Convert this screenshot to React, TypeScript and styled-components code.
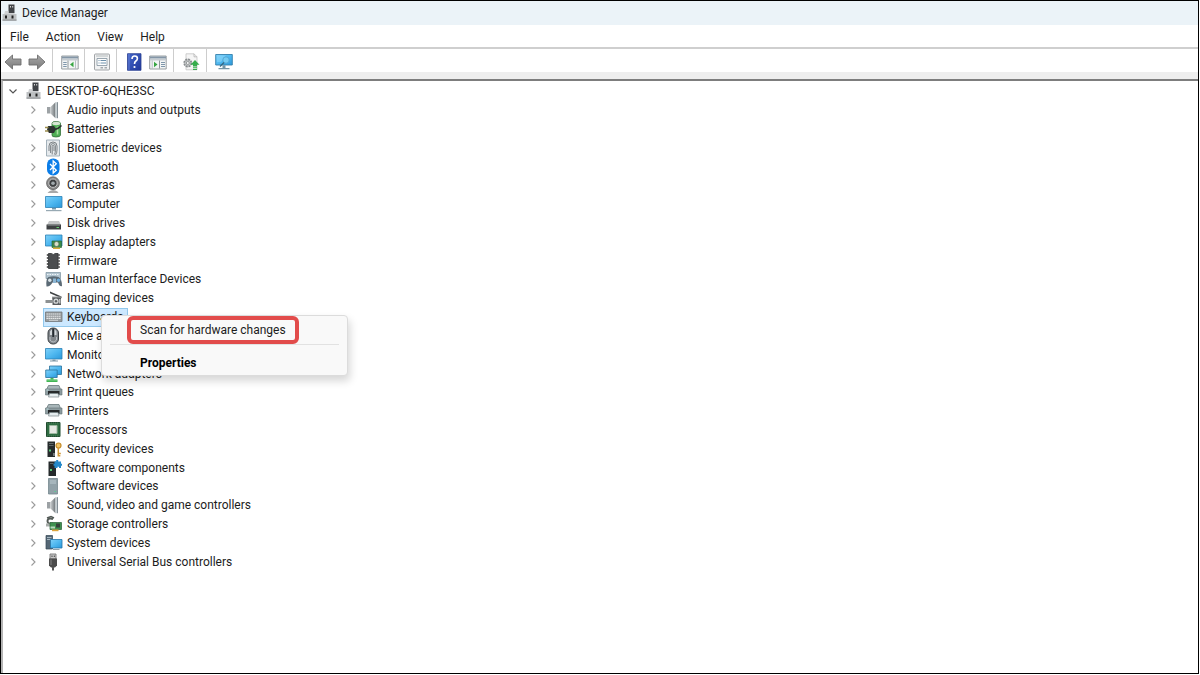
import React from "react";
import styled, { createGlobalStyle } from "styled-components";

const GlobalStyle = createGlobalStyle`
  * { box-sizing: border-box; }
  body {
    margin: 0;
    background: #fff;
    color: #1c1c1c;
    font: 12px/16px Roboto, "Open Sans", sans-serif;
  }
  button { font: inherit; color: inherit; background: none; border: 0; padding: 0; }
`;

const Screen = styled.div`
  display: flex;
  height: 100vh;
  padding: 0 1px 1px 0;
`;

const Window = styled.div`
  flex: 1;
  display: flex;
  flex-direction: column;
  border: 1px solid #000;
`;

const TitleBar = styled.header`
  display: flex;
  align-items: center;
  gap: 3px;
  height: 24px;
  background: #ebf3f8;
`;

const Title = styled.h1`
  margin: 0;
  font-size: 12px;
  line-height: 16px;
  font-weight: 400;
`;

const MenuBar = styled.nav`
  display: flex;
  gap: 1px;
  height: 24px;
  padding-left: 1px;
  border-bottom: 2px solid #cfcfcf;
`;

const MenuButton = styled.button`
  padding: 2px 8px 0;
`;

const Toolbar = styled.div`
  display: flex;
  height: 23px;
`;

const ToolGroup = styled.div<{ $wide?: boolean }>`
  display: flex;
  &:not(:first-child) {
    margin-left: ${(p) => (p.$wide ? 3 : 2)}px;
    padding-left: 5px;
    border-left: 1px solid #cdcdcd;
  }
`;

const ToolButton = styled.button`
  display: grid;
  place-items: center;
  width: 24px;
  padding-top: 2px;
`;

const Panel = styled.main`
  flex: 1;
  position: relative;
  border-top: 7px solid #eeeeee;
`;

const TreePane = styled.div`
  height: 100%;
  padding-top: 1px;
  border-top: 2px solid #7d7d7d;
  border-left: 2px solid #b4b4b4;
`;

const Tree = styled.ul`
  display: grid;
  grid-auto-rows: 1fr;
  height: 489px;
  margin: 0;
  padding: 0;
  list-style: none;
`;

const TreeRow = styled.li<{ $depth: number }>`
  display: flex;
  align-items: center;
  min-height: 0;
  padding-left: ${(p) => 2 + p.$depth * 20}px;
`;

const Expander = styled.button`
  display: grid;
  place-items: center;
  width: 16px;
  height: 16px;
  margin-right: 2px;
`;

const Node = styled.span<{ $selected?: boolean }>`
  display: flex;
  align-items: center;
  gap: 4px;
  height: 19px;
  padding: 0 4px 0 1px;
  border: 1px solid ${(p) => (p.$selected ? "#92c8ec" : "transparent")};
  background: ${(p) => (p.$selected ? "#cce8ff" : "transparent")};
  white-space: nowrap;
`;

const ContextMenu = styled.div`
  position: absolute;
  left: 100px;
  top: 236px;
  width: 247px;
  display: flex;
  flex-direction: column;
  padding-bottom: 2px;
  background: #f9f9f9;
  border: 1px solid #dcdcdc;
  border-radius: 4px;
  box-shadow: 2px 5px 8px rgba(0, 0, 0, 0.16);
`;

const HighlightedItem = styled.button`
  align-self: flex-start;
  height: 28px;
  margin: 0 0 0 25px;
  padding: 0 9px;
  border: 4px solid #e24c4b;
  border-radius: 6px;
  text-align: left;
  white-space: nowrap;
`;

const MenuDivider = styled.hr`
  width: 229px;
  margin: 0 8px;
  border: 0;
  border-top: 1px solid #e2e2e2;
`;

const DefaultItem = styled.button`
  height: 28px;
  padding: 8px 38px 0;
  color: #000;
  font-weight: 700;
  text-align: left;
`;

const HiddenDefs = styled.svg`
  position: absolute;
  width: 0;
  height: 0;
`;

const Glyph = styled.svg`
  display: block;
  flex: none;
  width: 18px;
  height: 18px;
`;

function Icon({ children }: { children: React.ReactNode }) {
  return (
    <Glyph viewBox="0 0 18 18" aria-hidden="true">
      {children}
    </Glyph>
  );
}

const Gradients = () => (
  <HiddenDefs aria-hidden="true">
    <defs>
      <linearGradient id="screen" x1="0" y1="0" x2="1" y2="1">
        <stop offset="0" stopColor="#7fd0f8" />
        <stop offset="0.5" stopColor="#4fb8f0" />
        <stop offset="1" stopColor="#2b98da" />
      </linearGradient>
      <linearGradient id="metal" x1="0" y1="0" x2="1" y2="0">
        <stop offset="0" stopColor="#c9cdcf" />
        <stop offset="1" stopColor="#6f7578" />
      </linearGradient>
      <linearGradient id="arrow" x1="0" y1="0" x2="0" y2="1">
        <stop offset="0" stopColor="#a9a9a9" />
        <stop offset="1" stopColor="#7b7b7b" />
      </linearGradient>
      <linearGradient id="help" x1="0" y1="0" x2="1" y2="1">
        <stop offset="0" stopColor="#4468cb" />
        <stop offset="1" stopColor="#20379b" />
      </linearGradient>
    </defs>
  </HiddenDefs>
);

const DeviceHub = () => (
  <Icon>
    <path d="M7.500.500h6v8.500h-6z" fill="#404347" />
    <path d="M9 2h1v1.500H9zM11.200 2h1v1.500h-1z" fill="#d8d8d8" />
    <path d="M4 7h3.500v2h6v2H3z" fill="#cfd1d3" />
    <path d="M1.500 10h14v6.500h-14z" fill="#bdc0c2" />
    <path d="M1.500 15.500h14v1.200h-14z" fill="#909395" />
    <path d="M4 11.500h2v3H4zM10.500 11.500h2v3h-2z" fill="#222" />
  </Icon>
);

const Speaker = () => (
  <Icon>
    <path d="M2 6h3.500v6.500H2z" fill="#9da2a5" />
    <path d="M5.500 6 10.500 1.200v16L5.500 12.500z" fill="url(#metal)" />
    <path d="M10.500 1.200q3.500 8 0 16z" fill="#aeb7bc" />
    <path d="M10.500 1.200h1.800v16h-1.800z" fill="#c6ced2" />
    <path d="M12.500 1.200v16" stroke="#76828a" strokeWidth=".9" />
  </Icon>
);

const Battery = () => (
  <Icon>
    <path d="M7 3q0-1.500 4-1.500T15.500 3v12q0 2-4.500 2t-4-2z" fill="#4fae55" stroke="#37713c" strokeWidth=".8" />
    <ellipse cx="11.200" cy="3.500" rx="4" ry="1.700" fill="#d7e6d4" />
    <path d="M12.500 6.500v8" stroke="#a8e2a0" strokeWidth="1.600" />
    <path d="M3 6h6l2 3-2 4H4L2 10z" fill="#2d3331" />
    <path d="M0 7.500h3.500M0 11h3.500" stroke="#9c8d4d" strokeWidth="1.400" />
    <path d="M10 9.500q4-1 6.500-4" fill="none" stroke="#2d3331" strokeWidth="1.400" />
  </Icon>
);

const Fingerprint = () => (
  <Icon>
    <path d="M1.500 1h13v16h-13z" fill="#e6eaed" stroke="#9aa9b3" strokeWidth=".9" />
    <g fill="none" stroke="#71777b" strokeWidth=".9">
      <path d="M4 12V7q0-4 4-4t4 4v4q0 3-1.500 5" />
      <path d="M5.600 14V7q0-2.400 2.400-2.400T10.400 7v4q0 3-1 4.500" />
      <path d="M7.200 15.500V7.500q0-1.200.9-1.200t.9 1.200V12" />
    </g>
  </Icon>
);

const Bluetooth = () => (
  <Icon>
    <rect x="2" y=".500" width="12.500" height="17" rx="6" fill="#0b7de8" />
    <path d="m5 6 6.300 6.200L8.200 15V3l3.100 2.800L5 12" fill="none" stroke="#fff" strokeWidth="1.300" />
  </Icon>
);

const Camera = () => (
  <Icon>
    <path d="M4 15.500q4-3 8.500 0l1 1.500h-11z" fill="#a9a9a9" />
    <circle cx="8" cy="7.200" r="6.400" fill="#8a8a8a" stroke="#5e5e5e" strokeWidth=".8" />
    <circle cx="8" cy="7.200" r="4.200" fill="#3e4042" stroke="#c9c9c9" strokeWidth="1" />
    <circle cx="8" cy="7.200" r="1.800" fill="#a2aaae" />
  </Icon>
);

const Computer = () => (
  <Icon>
    <path d="M.500 1.500h16.500v11H.500z" fill="url(#screen)" stroke="#2b80b5" strokeWidth=".8" />
    <path d="M7 13h4v1.500H7z" fill="#7496a9" />
    <path d="M1 15h15.500v1.200H1z" fill="#97a9b3" />
  </Icon>
);

const Disk = () => (
  <Icon>
    <path d="M4 7h10l2 4H2z" fill="#c5c7c8" />
    <path d="M1.500 10.500h14.500v5H1.500z" fill="#3d4042" />
    <path d="M2.500 11.500h12.500" stroke="#73787a" strokeWidth=".8" />
    <path d="M11.500 13h2.500v1h-2.500z" fill="#65d06f" />
  </Icon>
);

const Display = () => (
  <Icon>
    <path d="M.500 2h16.500v11H.500z" fill="url(#screen)" stroke="#2b80b5" strokeWidth=".8" />
    <path d="M7 8h9.500v6.500H7z" fill="#3c8c49" stroke="#236030" strokeWidth=".6" />
    <circle cx="11.500" cy="11" r="2.500" fill="#d9dfc8" stroke="#547157" strokeWidth=".8" />
    <path d="M8 14.500h7V16H8z" fill="#d7ae3b" />
  </Icon>
);

const Firmware = () => (
  <Icon>
    <path d="M3.500 1.500h3q1.800 2 3.600 0h3v15H3.500z" fill="#4b4d4f" stroke="#2f3132" strokeWidth=".8" />
    <path d="M1.800 3h1.500m-1.500 3h1.500M1.800 9h1.500m-1.500 3h1.500m-1.500 3h1.500M13.300 3h1.500m-1.500 3h1.500m-1.500 3h1.500m-1.500 3h1.500m-1.500 3h1.500" stroke="#333" strokeWidth="1.600" />
  </Icon>
);

const HumanInterface = () => (
  <Icon>
    <path d="M1 2.500h14.500v6H1z" fill="#b2c4cf" stroke="#7a909e" strokeWidth=".7" />
    <path d="M2 4.500h12.500" stroke="#eff5f8" strokeDasharray="1.500 1" />
    <path d="M3.500 7q5-1.500 10 0 3.500 2 3.500 9-2 1.500-4-3.500H7.500Q5 17 1.500 16.500.500 9 3.500 7z" fill="#5b6a75" />
    <circle cx="4.800" cy="10.300" r="1.700" fill="#dbe4e9" />
    <circle cx="13.500" cy="10.300" r="1.700" fill="#6eb1e1" />
    <path d="M8 8.500h3v4.500H8z" fill="#8db6d3" />
  </Icon>
);

const Imaging = () => (
  <Icon>
    <path d="m5 2.500 11.500 5v1.700L5 4.300z" fill="#3f4244" />
    <path d="M7 7.500h9v3H7z" fill="#a4a7a8" />
    <path d="M.500 11h7v3h-7z" fill="#8d9192" />
    <path d="M7.500 8.500H16v7.500H7.500z" fill="#585c5f" />
    <circle cx="11" cy="12.200" r="2.600" fill="#d5d8d9" />
    <circle cx="11" cy="12.200" r="1.200" fill="#5d6264" />
    <path d="M14 10h1.500v4.500H14z" fill="#bcbfc0" />
  </Icon>
);

const Keyboard = () => (
  <Icon>
    <path d="M.500 4h16.500v9.500H.500z" fill="#969b9e" stroke="#72777a" strokeWidth=".8" />
    <path d="M1.500 6h14.500M1.500 8.200h14.500M1.500 10.400h14.500" stroke="#eceeef" strokeWidth="1.100" strokeDasharray="1.400 .6" />
    <path d="M4 12.300h9" stroke="#dfe2e3" strokeWidth=".8" />
  </Icon>
);

const Mouse = () => (
  <Icon>
    <rect x="3" y="1" width="10.500" height="16" rx="5" fill="#81868b" stroke="#3b4045" strokeWidth="1" />
    <path d="M5 8V4.500Q6 3 7 2.500V8zM11.500 8V4.500q-1-1.500-2-2V8z" fill="#d3d8dc" />
    <path d="M8.200 1.500V10" stroke="#252b31" strokeWidth="1.800" />
    <path d="M5 10v3q3.200 4 6.500 0v-3" fill="none" stroke="#b9c0c5" />
  </Icon>
);

const Monitor = () => (
  <Icon>
    <path d="M.500 2.500h16.500v10.500H.500z" fill="url(#screen)" stroke="#2b80b5" strokeWidth=".8" />
    <path d="M7.500 13.500h3v1h2.500v1H5v-1h2.500z" fill="#8199a7" />
  </Icon>
);

const Network = () => (
  <Icon>
    <path d="M4.500 1h12v8.500h-12z" fill="url(#screen)" stroke="#28719c" strokeWidth=".8" />
    <path d="M.700 5h11.500v7.500H.700z" fill="url(#screen)" stroke="#28719c" strokeWidth=".8" />
    <path d="M5.500 13h3v1.500h4V17h-11v-2.500h4z" fill="#41b554" />
    <path d="M2 15h10" stroke="#7fd38a" />
  </Icon>
);

const Printer = () => (
  <Icon>
    <path d="M3.500 2.500H14l1.500 4h-14z" fill="#a8b6b9" stroke="#69787c" strokeWidth=".8" />
    <path d="M.500 6h16.500v6H.500z" fill="#8d9ca0" stroke="#607074" strokeWidth=".6" />
    <path d="M3 8h11.500v3.500H3z" fill="#26292a" />
    <path d="M4.500 10.500h8.500l1 3.500H3.500z" fill="#e6edef" stroke="#7b888b" strokeWidth=".7" />
    <path d="M1.500 7h2" stroke="#c4e3e5" />
  </Icon>
);

const Processor = () => (
  <Icon>
    <path d="M1.500 1.500H15v14H1.500z" fill="#2f6c42" stroke="#214c30" />
    <path d="M4.500 4.500H12v8H4.500z" fill="#e5e9e3" stroke="#9db8a0" />
    <path d="M2 2h12.500M2 15h12.500" stroke="#68936e" strokeDasharray="1 1" strokeWidth=".6" />
  </Icon>
);

const Security = () => (
  <Icon>
    <path d="M2.500 1.500h7.500v15.500H2.500z" fill="#252a2b" />
    <path d="M4 3h4.500v1H4zM4 5h4.500v1H4z" fill="#5f6667" />
    <path d="M4 9.500h2v2H4z" fill="#55c876" />
    <path d="M8 13h2v3H8z" fill="#737979" />
    <circle cx="13.500" cy="5.500" r="2.500" fill="#f0c467" stroke="#c68d2c" strokeWidth="1.200" />
    <path d="M13.300 8v8.500m.5-3h2m-2 2.300h1.500" stroke="#cf9635" strokeWidth="1.500" />
  </Icon>
);

const SoftwareComponent = () => (
  <Icon>
    <path d="M3.500 2.500H11v14.500H3.500z" fill="#252a2b" />
    <path d="M5 4h3.500v1H5z" fill="#5f6667" />
    <path d="M5 10h2v2H5z" fill="#55c876" />
    <path d="M9.500 2.500h1.700V1h2v1.500H16v2.300h1v2h-1V9h-2V7.800h-1.500V9h-3V6.800h-1v-2h1z" fill="#2589c9" />
  </Icon>
);

const SoftwareDevice = () => (
  <Icon>
    <path d="M3.500 1.500h9v15.500h-9z" fill="#91a1a8" stroke="#75868e" strokeWidth=".8" />
    <path d="M5 4h6M5 6h6" stroke="#bccbd1" />
    <path d="M9.500 14h1.500v1H9.500z" fill="#5bcf91" />
  </Icon>
);

const Storage = () => (
  <Icon>
    <path d="m2 3 4-1.500L9 3" fill="none" stroke="#535a57" strokeWidth="1.500" />
    <path d="M8 4q-5.500-1.500-5.500 2t5.500 2.500" fill="none" stroke="#555c58" strokeWidth="2" />
    <path d="M1 8.500h4v3H1z" fill="#a8adaa" />
    <path d="M5 7.500h11.500v7H5z" fill="#3f9150" stroke="#275f35" strokeWidth=".7" />
    <path d="M11 8.500h4v4h-4z" fill="#35413a" />
    <path d="M5.500 11.500H10v2H5.500z" fill="#b8d7bd" />
    <path d="M7 14.500h6.500v1.700H7z" fill="#dda43b" />
  </Icon>
);

const SystemDevice = () => (
  <Icon>
    <path d="M1 1.500h6.500v13.500H1z" fill="#556775" stroke="#344654" strokeWidth=".7" />
    <path d="M2 3.500h4.500M2 5.500h4.500" stroke="#a5b5bf" />
    <path d="M5.500 5.500h11.500v8.500H5.500z" fill="url(#screen)" stroke="#2475a8" strokeWidth=".8" />
    <path d="M8 15.500h6.500" stroke="#91a2ac" />
  </Icon>
);

const Usb = () => (
  <Icon>
    <path d="M5 1h6v5H5z" fill="#c8c8c8" stroke="#777" strokeWidth=".9" />
    <path d="M6.500 2.500h1v1.500h-1zM8.800 2.500h1v1.500h-1z" fill="#444" />
    <path d="M4 5.500h8v7l-2 2H6l-2-2z" fill="#4b4b4b" />
    <path d="M6 6.500v5.500" stroke="#858585" />
    <path d="M8 14v3.500" stroke="#555" strokeWidth="2" />
  </Icon>
);

const BackArrow = () => (
  <Icon>
    <path d="m1 9 7.500-7v4H17v6H8.500v4z" fill="url(#arrow)" stroke="#6e6e6e" strokeWidth=".9" strokeLinejoin="round" />
  </Icon>
);

const ForwardArrow = () => (
  <Icon>
    <path d="M17 9 9.500 2v4H1v6h8.500v4z" fill="url(#arrow)" stroke="#6e6e6e" strokeWidth=".9" strokeLinejoin="round" />
  </Icon>
);

const ConsoleTree = () => (
  <Icon>
    <path d="M.700 3h16.500v13H.700z" fill="#f3f5f5" stroke="#8e9599" strokeWidth=".9" />
    <path d="M1 3.500h16v2H1z" fill="#8496a7" />
    <path d="M1 6h16v1.500H1z" fill="#c5cbd0" />
    <path d="M7 7.500v8" stroke="#8e9599" />
    <path d="M2.200 9.500h3.500M2.200 11.500h3.500M2.200 13.500h3.500" stroke="#7f96aa" />
    <path d="M12.500 8.800v5.400L9 11.500z" fill="#36a541" />
    <path d="M14.500 7.500v8" stroke="#a9b3ba" strokeWidth=".8" />
  </Icon>
);

const ActionPane = () => (
  <Icon>
    <path d="M.700 3h16.500v13H.700z" fill="#f3f5f5" stroke="#8e9599" strokeWidth=".9" />
    <path d="M1 3.500h16v2H1z" fill="#8496a7" />
    <path d="M1 6h16v1.500H1z" fill="#c5cbd0" />
    <path d="M10.500 7.500v8" stroke="#8e9599" />
    <path d="M12 9.500h4M12 11.500h4M12 13.500h4" stroke="#7f96aa" />
    <path d="M5 8.800v5.400l3.500-2.700z" fill="#36a541" />
    <path d="M3.200 7.500v8" stroke="#a9b3ba" strokeWidth=".8" />
  </Icon>
);

const PropertiesSheet = () => (
  <Icon>
    <rect x="1.500" y="1" width="15" height="16" rx="1" fill="#f1f2f3" stroke="#969a9d" strokeWidth=".9" />
    <path d="M3 3h12" stroke="#c0c4c7" strokeWidth="1.200" />
    <path d="M4 5.500h10v7H4z" fill="#fff" stroke="#8d9ca7" strokeWidth=".9" />
    <path d="M5.500 7.500h1m1 0H13M5.500 10h1m1 0H13" stroke="#6d91ac" />
    <path d="M7.500 14.700h2.500m1.500 0H14" stroke="#a3a9ad" strokeWidth="1.400" />
  </Icon>
);

const HelpBook = () => (
  <Icon>
    <path d="M2.500.700h13.500v16.600H2.500z" fill="url(#help)" stroke="#293f91" strokeWidth=".8" />
    <path d="M4 1v16" stroke="#6c86d8" strokeWidth=".8" />
    <path d="M7 6q0-3 2.700-3t2.700 2.500q0 1.500-1.500 2.500T9.500 11" fill="none" stroke="#fff" strokeWidth="1.600" />
    <circle cx="9.500" cy="14" r="1.100" fill="#fff" />
  </Icon>
);

const ScanHardware = () => (
  <Icon>
    <path d="M4 .800h8l3 3v13H4z" fill="#f5f5f5" stroke="#c3c3c3" strokeWidth=".8" />
    <path d="M12 .800v3h3" fill="none" stroke="#b3b3b3" strokeWidth=".8" />
    <circle cx="5.800" cy="10" r="3.600" fill="#c5c8c9" stroke="#898d8f" strokeWidth="1.700" strokeDasharray="2 .8" />
    <circle cx="5.800" cy="10" r="1.500" fill="#f5f5f5" stroke="#7d8183" strokeWidth=".7" />
    <path d="m13 7 4.500 4.700H15v1.800h-4v-1.800H8.500zM11 14.200h4v1.100h-4zM11 16h4v1.100h-4z" fill="#36ad4c" />
  </Icon>
);

const RemoteComputer = () => (
  <Icon>
    <path d="M.700 1.500h16.600v10.500H.700z" fill="url(#screen)" stroke="#3480ad" strokeWidth=".9" />
    <path d="M2 2.500h9L6 9H2z" fill="#8cd7fa" opacity=".55" />
    <circle cx="11" cy="7" r="3.200" fill="#75caf1" stroke="#4b9fcd" strokeWidth=".8" />
    <path d="m9 9.500-4 4" stroke="#356782" strokeWidth="1.300" />
    <path d="M7.500 12.300h3V15h4v1.300H3.500V15h4z" fill="#7595a6" />
  </Icon>
);

function Chevron({ open }: { open?: boolean }) {
  return (
    <svg width="10" height="10" viewBox="0 0 10 10" fill="none" aria-hidden="true">
      {open ? (
        <path d="m1.500 3.500 3.500 3.500 3.500-3.500" stroke="#555" strokeWidth="1.200" />
      ) : (
        <path d="m3.500 1.500 3.500 3.500-3.500 3.500" stroke="#9a9a9a" strokeWidth="1.100" />
      )}
    </svg>
  );
}

const categories: { name: string; icon: React.FC; selected?: boolean }[] = [
  { name: "Audio inputs and outputs", icon: Speaker },
  { name: "Batteries", icon: Battery },
  { name: "Biometric devices", icon: Fingerprint },
  { name: "Bluetooth", icon: Bluetooth },
  { name: "Cameras", icon: Camera },
  { name: "Computer", icon: Computer },
  { name: "Disk drives", icon: Disk },
  { name: "Display adapters", icon: Display },
  { name: "Firmware", icon: Firmware },
  { name: "Human Interface Devices", icon: HumanInterface },
  { name: "Imaging devices", icon: Imaging },
  { name: "Keyboards", icon: Keyboard, selected: true },
  { name: "Mice and other pointing devices", icon: Mouse },
  { name: "Monitors", icon: Monitor },
  { name: "Network adapters", icon: Network },
  { name: "Print queues", icon: Printer },
  { name: "Printers", icon: Printer },
  { name: "Processors", icon: Processor },
  { name: "Security devices", icon: Security },
  { name: "Software components", icon: SoftwareComponent },
  { name: "Software devices", icon: SoftwareDevice },
  { name: "Sound, video and game controllers", icon: Speaker },
  { name: "Storage controllers", icon: Storage },
  { name: "System devices", icon: SystemDevice },
  { name: "Universal Serial Bus controllers", icon: Usb },
];

const toolGroups: { wide?: boolean; tools: { label: string; icon: React.FC }[] }[] = [
  { tools: [{ label: "Back", icon: BackArrow }, { label: "Forward", icon: ForwardArrow }] },
  { wide: true, tools: [{ label: "Show/Hide Console Tree", icon: ConsoleTree }] },
  { tools: [{ label: "Properties", icon: PropertiesSheet }] },
  { tools: [{ label: "Help", icon: HelpBook }, { label: "Show/Hide Action Pane", icon: ActionPane }] },
  { wide: true, tools: [{ label: "Scan for hardware changes", icon: ScanHardware }] },
  { wide: true, tools: [{ label: "Devices", icon: RemoteComputer }] },
];

export default function App() {
  return (
    <Screen>
      <GlobalStyle />
      <Gradients />
      <Window>
        <TitleBar>
          <DeviceHub />
          <Title>Device Manager</Title>
        </TitleBar>
        <MenuBar>
          {["File", "Action", "View", "Help"].map((item) => (
            <MenuButton key={item}>{item}</MenuButton>
          ))}
        </MenuBar>
        <Toolbar role="toolbar" aria-label="Tools">
          {toolGroups.map((group, i) => (
            <ToolGroup key={i} $wide={group.wide}>
              {group.tools.map(({ label, icon: ToolIcon }) => (
                <ToolButton key={label} aria-label={label}>
                  <ToolIcon />
                </ToolButton>
              ))}
            </ToolGroup>
          ))}
        </Toolbar>
        <Panel>
          <TreePane>
            <Tree role="tree" aria-label="Devices">
              <TreeRow $depth={0} role="treeitem" aria-level={1} aria-expanded>
                <Expander aria-label="Collapse">
                  <Chevron open />
                </Expander>
                <Node>
                  <DeviceHub />
                  DESKTOP-6QHE3SC
                </Node>
              </TreeRow>
              {categories.map(({ name, icon: CategoryIcon, selected }) => (
                <TreeRow key={name} $depth={1} role="treeitem" aria-level={2} aria-selected={!!selected}>
                  <Expander aria-label={`Expand ${name}`}>
                    <Chevron />
                  </Expander>
                  <Node $selected={selected}>
                    <CategoryIcon />
                    {name}
                  </Node>
                </TreeRow>
              ))}
            </Tree>
          </TreePane>
          <ContextMenu role="menu">
            <HighlightedItem role="menuitem">Scan for hardware changes</HighlightedItem>
            <MenuDivider />
            <DefaultItem role="menuitem">Properties</DefaultItem>
          </ContextMenu>
        </Panel>
      </Window>
    </Screen>
  );
}
